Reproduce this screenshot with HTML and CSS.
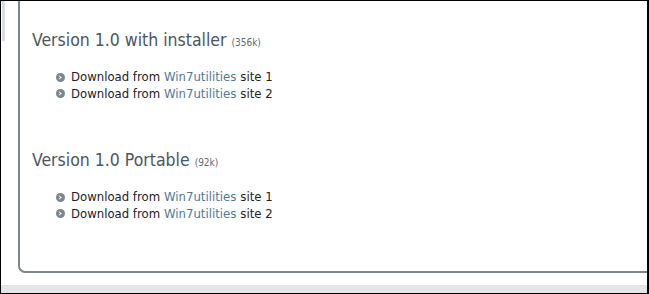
FILE: index.html
```html
<!DOCTYPE html>
<html>
<head>
<meta charset="utf-8">
<link rel="stylesheet" href="styles.css">
</head>
<body>
<div class="frame">
  <div class="main">
    <div class="strip"></div>
    <div class="panel">
      <section class="version">
        <h2 class="title">Version 1.0 with installer <span class="size">(356k)</span></h2>
        <ul class="links">
          <li><span class="bullet"></span>Download from <a href="#">Win7utilities</a> site 1</li>
          <li><span class="bullet"></span>Download from <a href="#">Win7utilities</a> site 2</li>
        </ul>
      </section>
      <section class="version">
        <h2 class="title">Version 1.0 Portable <span class="size">(92k)</span></h2>
        <ul class="links">
          <li><span class="bullet"></span>Download from <a href="#">Win7utilities</a> site 1</li>
          <li><span class="bullet"></span>Download from <a href="#">Win7utilities</a> site 2</li>
        </ul>
      </section>
    </div>
  </div>
  <div class="band"></div>
</div>
</body>
</html>
```
FILE: styles.css
```css
html, body {
  margin: 0;
  padding: 0;
  background: #fff;
}
.frame {
  width: 649px;
  height: 294px;
  box-sizing: border-box;
  border: 1px solid #000;
  border-right-width: 2px;
  display: flex;
  flex-direction: column;
  font-family: "DejaVu Sans Condensed", "DejaVu Sans", sans-serif;
}
.main {
  display: flex;
  height: 272px;
}
.strip {
  width: 3px;
  height: 40px;
  margin-left: 1px;
  background: #d5dde6;
  flex: none;
}
.panel {
  flex: 1;
  margin-left: 13px;
  border-left: 2px solid #7b868e;
  border-bottom: 2px solid #7b868e;
  border-bottom-left-radius: 7px;
  padding-left: 12px;
  padding-top: 29px;
  box-sizing: border-box;
}
.version {
  margin-bottom: 48px;
}
.title {
  margin: 0;
  font-weight: normal;
  font-size: 17.5px;
  line-height: 20px;
  color: #4b5560;
}
.size {
  font-size: 10px;
  color: #5f6a73;
}
.links {
  list-style: none;
  margin: 16px 0 0 24px;
  padding: 0;
  font-size: 13px;
  line-height: 16.5px;
  color: #1e2226;
}
.links li {
  display: flex;
  align-items: center;
}
.links a {
  color: #4d7a99;
  text-decoration: none;
  margin: 0 4px;
}
.bullet {
  width: 9px;
  height: 9px;
  border-radius: 50%;
  background: #7b868e;
  margin-right: 6px;
  position: relative;
}
.bullet::after {
  content: "";
  position: absolute;
  left: 2px;
  top: 3px;
  width: 2px;
  height: 2px;
  border-right: 1.5px solid #fff;
  border-top: 1.5px solid #fff;
  transform: rotate(45deg);
}
.band {
  margin-top: 12px;
  height: 8px;
  background: #e3e5e8;
}
```
